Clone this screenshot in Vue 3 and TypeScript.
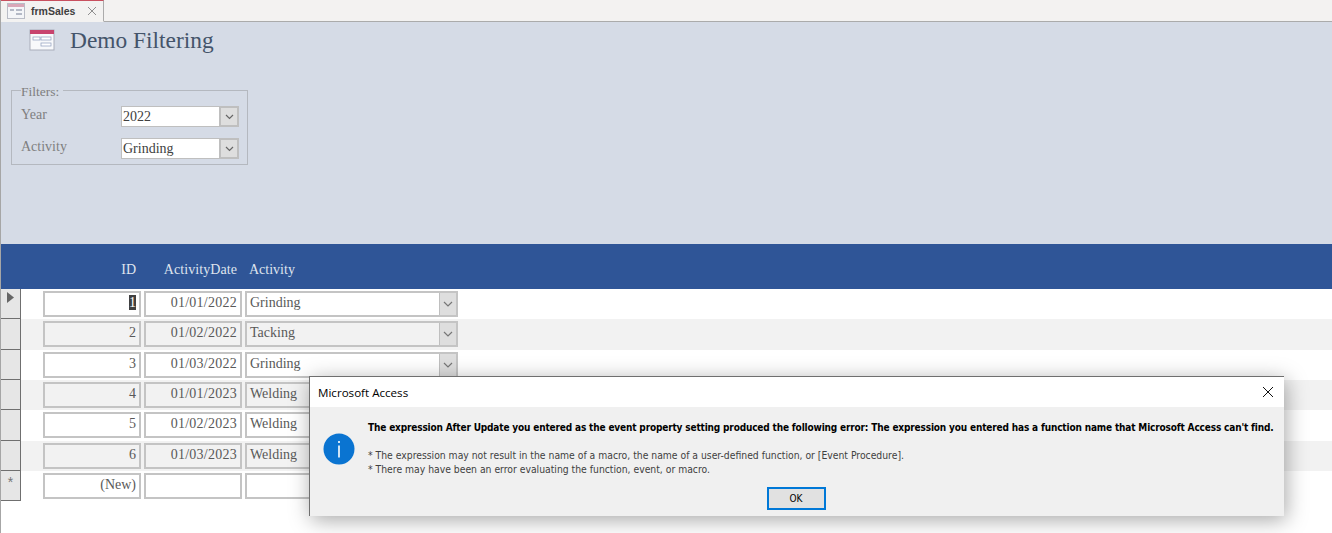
<script setup lang="ts">
interface SalesRow {
  id: string;
  date: string;
  activity: string;
}

const rows: SalesRow[] = [
  { id: '1', date: '01/01/2022', activity: 'Grinding' },
  { id: '2', date: '01/02/2022', activity: 'Tacking' },
  { id: '3', date: '01/03/2022', activity: 'Grinding' },
  { id: '4', date: '01/01/2023', activity: 'Welding' },
  { id: '5', date: '01/02/2023', activity: 'Welding' },
  { id: '6', date: '01/03/2023', activity: 'Welding' },
];
</script>

<template>
  <div class="app">
    <div class="tabstrip">
      <div class="tab">
        <svg class="tab-icon" width="18" height="16" viewBox="0 0 18 16">
          <rect x="0.5" y="0.5" width="17" height="15" fill="#f4f5f8" stroke="#b9bcc6" />
          <rect x="1" y="1" width="16" height="3" fill="#d9a7b8" />
          <rect x="3" y="6" width="4" height="2" fill="#b4b9c6" />
          <rect x="9" y="6" width="6" height="2" fill="#b4b9c6" />
          <rect x="9" y="10" width="6" height="2" fill="#b4b9c6" />
        </svg>
        <span class="tab-label">frmSales</span>
        <svg class="tab-close" width="10" height="10" viewBox="0 0 10 10">
          <path d="M1 1L9 9M9 1L1 9" stroke="#8f8f8f" stroke-width="1" fill="none" />
        </svg>
      </div>
    </div>

    <div class="form-header">
      <div class="title-row">
        <svg width="26" height="22" viewBox="0 0 26 22">
          <rect x="1" y="1" width="24" height="20" fill="#f8f9fb" stroke="#a9adba" />
          <rect x="1" y="1" width="24" height="4" fill="#c8446e" />
          <rect x="4" y="8" width="7" height="3" fill="#fff" stroke="#8d9cbc" stroke-width="0.7" />
          <rect x="12" y="8" width="10" height="3" fill="#fff" stroke="#8d9cbc" stroke-width="0.7" />
          <rect x="12" y="14" width="10" height="3" fill="#fff" stroke="#8d9cbc" stroke-width="0.7" />
        </svg>
        <h1 class="title">Demo Filtering</h1>
      </div>

      <fieldset class="filters">
        <legend>Filters:</legend>
        <div class="filter-row">
          <label>Year</label>
          <div class="combo combo-small">
            <span class="combo-text">2022</span>
            <span class="combo-btn">
              <svg width="9" height="6" viewBox="0 0 9 6"><path d="M1 1l3.500 3.500L8 1" stroke="#666" stroke-width="1.200" fill="none" /></svg>
            </span>
          </div>
        </div>
        <div class="filter-row">
          <label>Activity</label>
          <div class="combo combo-small">
            <span class="combo-text">Grinding</span>
            <span class="combo-btn">
              <svg width="9" height="6" viewBox="0 0 9 6"><path d="M1 1l3.500 3.500L8 1" stroke="#666" stroke-width="1.200" fill="none" /></svg>
            </span>
          </div>
        </div>
      </fieldset>
    </div>

    <div class="grid-header">
      <span class="col-id">ID</span>
      <span class="col-date">ActivityDate</span>
      <span class="col-activity">Activity</span>
    </div>

    <div class="detail">
      <div v-for="(row, i) in rows" :key="row.id" class="row" :class="{ alt: i % 2 === 1 }">
        <div class="selector">
          <svg v-if="i === 0" width="7" height="11" viewBox="0 0 7 11"><path d="M0 0l7 5.500L0 11z" fill="#666" /></svg>
        </div>
        <div class="cell right">
          <span :class="{ selected: i === 0 }">{{ row.id }}</span>
        </div>
        <div class="cell right date">{{ row.date }}</div>
        <div class="combo combo-row">
          <span class="combo-text">{{ row.activity }}</span>
          <span class="combo-btn">
            <svg width="10" height="6" viewBox="0 0 10 6"><path d="M1 1l4 4 4-4" stroke="#777" stroke-width="1.200" fill="none" /></svg>
          </span>
        </div>
      </div>
      <div class="row">
        <div class="selector star">*</div>
        <div class="cell right">(New)</div>
        <div class="cell"></div>
        <div class="cell"></div>
      </div>
    </div>

    <div class="dialog">
      <div class="dialog-title">
        <span>Microsoft Access</span>
        <svg width="12" height="12" viewBox="0 0 12 12">
          <path d="M1 1L11 11M11 1L1 11" stroke="#111" stroke-width="1" fill="none" />
        </svg>
      </div>
      <div class="dialog-body">
        <div class="dialog-content">
          <svg class="info" width="32" height="32" viewBox="0 0 32 32">
            <circle cx="16" cy="16" r="15.500" fill="#0a74d1" />
            <rect x="15.200" y="8" width="1.600" height="2" fill="#fff" />
            <rect x="15.200" y="12.500" width="1.600" height="12" fill="#fff" />
          </svg>
          <div class="dialog-text">
            <p class="msg">The expression After Update you entered as the event property setting produced the following error: The expression you entered has a function name that Microsoft Access can't find.</p>
            <p class="note">* The expression may not result in the name of a macro, the name of a user-defined function, or [Event Procedure].</p>
            <p class="note">* There may have been an error evaluating the function, event, or macro.</p>
          </div>
        </div>
        <button class="ok">OK</button>
      </div>
    </div>
  </div>
</template>

<style>
html,
body {
  margin: 0;
  background: #fff;
  overflow: hidden;
}
</style>

<style scoped>
.app {
  position: relative;
  width: 1332px;
  height: 533px;
  overflow: hidden;
  background: #fff;
  font-family: "Liberation Serif", serif;
  border-left: 1px solid #a6a6a6;
  box-sizing: border-box;
}

.tabstrip {
  height: 22px;
  box-sizing: border-box;
  background: #f3f2f1;
  border-bottom: 1px solid #ababab;
}

.tab {
  width: 103px;
  height: 22px;
  box-sizing: border-box;
  display: flex;
  align-items: center;
  background: #f3f2f1;
  border-top: 1px solid #c8505f;
  border-right: 1px solid #ababab;
  border-bottom: 1px solid #f3f2f1;
  padding-left: 6px;
}

.tab-label {
  font: bold 10.500px "Liberation Sans", sans-serif;
  color: #3f3f3f;
  margin-left: 6px;
  width: 56px;
}

.form-header {
  height: 222px;
  box-sizing: border-box;
  background: #d5dbe6;
  padding: 4px 0 0 10px;
}

.title-row {
  display: flex;
  align-items: center;
  gap: 15px;
  padding-left: 18px;
  height: 28px;
}

.title {
  margin: 0;
  font-size: 23.400px;
  font-weight: normal;
  color: #44546a;
}

.filters {
  width: 237px;
  height: 82px;
  box-sizing: border-box;
  margin: 29px 0 0 0;
  padding: 8px 8px 0 9px;
  border: 1px solid #b4b8bf;
  font-size: 14px;
  color: #7f7f7f;
}

.filters legend {
  padding: 2px 4px 0 0;
  font-size: 13.500px;
  line-height: 13px;
  color: #7f7f7f;
}

.filter-row {
  display: flex;
  align-items: center;
  justify-content: space-between;
  height: 21px;
  margin-bottom: 11px;
}

.filter-row label {
  margin-bottom: 3px;
}

.combo {
  display: flex;
  align-items: stretch;
  box-sizing: border-box;
  background: #fff;
  border: 1px solid #bfbfbf;
  color: #404040;
}

.combo-small {
  width: 118px;
  height: 21px;
  font-size: 14px;
}

.combo-row {
  width: 213px;
  height: 26px;
  font-size: 14px;
  background: inherit;
  color: #595959;
  border: 2px solid #c4c4c4;
}

.combo-text {
  flex: 1;
  padding-left: 1px;
  line-height: 19px;
}

.combo-row .combo-text {
  padding-left: 3px;
  line-height: 20px;
}

.combo-btn {
  width: 16px;
  display: flex;
  align-items: center;
  justify-content: center;
  background: #dedede;
  border-left: 1px solid #bfbfbf;
}

.combo-small .combo-btn {
  border: 2px solid #bfbfbf;
  margin: -1px -1px -1px 0;
}

.grid-header {
  height: 45px;
  box-sizing: border-box;
  background: #2f5597;
  color: #dfe4ee;
  display: flex;
  align-items: center;
  font-size: 14px;
  padding-top: 7px;
}

.col-id {
  width: 135px;
  text-align: right;
}

.col-date {
  width: 101px;
  text-align: right;
  letter-spacing: 0.080px;
}

.col-activity {
  margin-left: 12px;
}

.detail {
  display: flex;
  flex-direction: column;
}

.row {
  height: 30.330px;
  display: flex;
  align-items: center;
  background: #fff;
}

.row.alt {
  background: #f2f2f2;
}

.selector {
  width: 20px;
  height: 100%;
  box-sizing: border-box;
  background: #e6e6e6;
  border: 1px solid #6f6f6f;
  border-top: none;
  border-left: none;
  margin-right: 22px;
  display: flex;
  justify-content: center;
  padding-top: 3px;
  flex: none;
}

.star {
  font: 14px "Liberation Sans", sans-serif;
  color: #777;
}

.cell {
  width: 98px;
  height: 26px;
  box-sizing: border-box;
  border: 2px solid #c4c4c4;
  background: inherit;
  color: #595959;
  font-size: 14px;
  line-height: 20px;
  padding: 0 3px;
  margin-right: 3px;
  flex: none;
}

.date {
  letter-spacing: 0.250px;
}

.row .cell:nth-child(4) {
  width: 213px;
}

.right {
  text-align: right;
}

.selected {
  background: #404040;
  color: #fff;
}

.dialog {
  position: absolute;
  left: 308px;
  top: 376px;
  width: 975px;
  height: 140px;
  background: #f0f0f0;
  border: 1px solid #6f6f6f;
  border-bottom: none;
  border-right: none;
  box-sizing: border-box;
  box-shadow: 2px 4px 20px rgba(0, 0, 0, 0.35);
  display: flex;
  flex-direction: column;
  font-family: "DejaVu Sans", sans-serif;
  font-stretch: condensed;
}

.dialog-title {
  height: 30px;
  flex: none;
  background: #fff;
  display: flex;
  align-items: center;
  justify-content: space-between;
  padding: 0 10px 0 8px;
  font: 11.600px "Open Sans", sans-serif;
  color: #000;
}

.dialog-body {
  flex: 1;
  display: flex;
  flex-direction: column;
  align-items: center;
}

.dialog-content {
  align-self: stretch;
  display: flex;
  gap: 13px;
  padding: 14px 0 0 13px;
}

.info {
  margin-top: 12px;
  flex: none;
}

.dialog-text p {
  margin: 0;
  white-space: nowrap;
}

.msg {
  font-size: 10px;
  letter-spacing: -0.160px;
  font-weight: bold;
  color: #000;
  line-height: 13px;
  margin-bottom: 14px !important;
}

.note {
  font-size: 10.300px;
  line-height: 14px;
  color: #404040;
}

.ok {
  width: 59px;
  height: 23px;
  margin: 11px 2px 0 0;
  background: #e1e1e1;
  border: 2px solid #0078d7;
  font: 10px "DejaVu Sans", sans-serif;
  font-stretch: condensed;
  color: #000;
  padding: 0;
}
</style>
